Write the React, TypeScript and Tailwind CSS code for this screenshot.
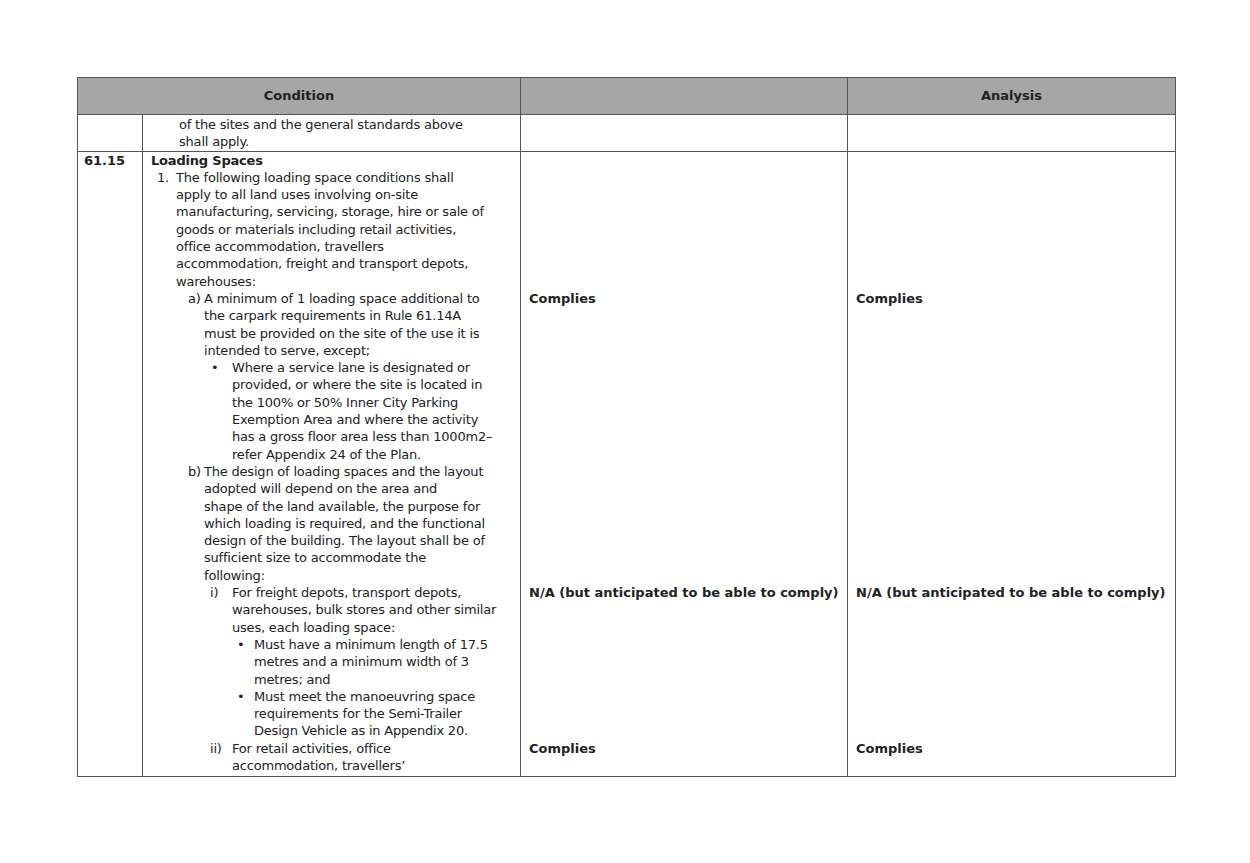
const lines: { t: string; m?: string; x: number; mx?: number; b?: boolean; a?: string }[] = [
  { t: "Loading Spaces", x: 0, b: true },
  { m: "1.", mx: 6, t: "The following loading space conditions shall", x: 25 },
  { t: "apply to all land uses involving on-site", x: 25 },
  { t: "manufacturing, servicing, storage, hire or sale of", x: 25 },
  { t: "goods or materials including retail activities,", x: 25 },
  { t: "office accommodation, travellers", x: 25 },
  { t: "accommodation, freight and transport depots,", x: 25 },
  { t: "warehouses:", x: 25 },
  { m: "a)", mx: 37, t: "A minimum of 1 loading space additional to", x: 53, a: "Complies" },
  { t: "the carpark requirements in Rule 61.14A", x: 53 },
  { t: "must be provided on the site of the use it is", x: 53 },
  { t: "intended to serve, except;", x: 53 },
  { m: "•", mx: 60, t: "Where a service lane is designated or", x: 81 },
  { t: "provided, or where the site is located in", x: 81 },
  { t: "the 100% or 50% Inner City Parking", x: 81 },
  { t: "Exemption Area and where the activity", x: 81 },
  { t: "has a gross floor area less than 1000m2–", x: 81 },
  { t: "refer Appendix 24 of the Plan.", x: 81 },
  { m: "b)", mx: 37, t: "The design of loading spaces and the layout", x: 53 },
  { t: "adopted will depend on the area and", x: 53 },
  { t: "shape of the land available, the purpose for", x: 53 },
  { t: "which loading is required, and the functional", x: 53 },
  { t: "design of the building. The layout shall be of", x: 53 },
  { t: "sufficient size to accommodate the", x: 53 },
  { t: "following:", x: 53 },
  { m: "i)", mx: 59, t: "For freight depots, transport depots,", x: 81, a: "N/A (but anticipated to be able to comply)" },
  { t: "warehouses, bulk stores and other similar", x: 81 },
  { t: "uses, each loading space:", x: 81 },
  { m: "•", mx: 86, t: "Must have a minimum length of 17.5", x: 103 },
  { t: "metres and a minimum width of 3", x: 103 },
  { t: "metres; and", x: 103 },
  { m: "•", mx: 86, t: "Must meet the manoeuvring space", x: 103 },
  { t: "requirements for the Semi-Trailer", x: 103 },
  { t: "Design Vehicle as in Appendix 20.", x: 103 },
  { m: "ii)", mx: 59, t: "For retail activities, office", x: 81, a: "Complies" },
  { t: "accommodation, travellers’", x: 81 },
];

const font = { fontFamily: '"DejaVu Sans", sans-serif' };

export default function App() {
  return (
    <div className="w-[1250px] h-[863px] bg-white pt-[77px] pl-[77px] text-[13px] text-[#222]" style={font}>
      <table className="border-collapse w-[1098px] table-fixed">
        <colgroup>
          <col className="w-[65px]" />
          <col className="w-[378px]" />
          <col className="w-[327px]" />
          <col className="w-[328px]" />
        </colgroup>
        <thead>
          <tr className="h-[37px] bg-[#a6a6a6] font-bold">
            <th colSpan={2} className="border border-[#555] text-center font-semibold">Condition</th>
            <th className="border border-[#555]"></th>
            <th className="border border-[#555] text-center font-semibold">Analysis</th>
          </tr>
        </thead>
        <tbody className="leading-[17.3px] align-top">
          <tr className="h-[36px]">
            <td className="border border-[#555]"></td>
            <td className="border border-[#555] pl-[36px] pt-px tracking-[-0.2px]">
              <div className="whitespace-nowrap">of the sites and the general standards above</div>
              <div>shall apply.</div>
            </td>
            <td className="border border-[#555]"></td>
            <td className="border border-[#555]"></td>
          </tr>
          <tr className="h-[625px]">
            <td className="border border-[#555] pl-[6px] font-bold">61.15</td>
            <td className="border border-[#555] pl-[8px] tracking-[-0.2px]">
              {lines.map((l, i) => (
                <div key={i} className={`relative whitespace-nowrap h-[17.3px] ${l.b ? "font-bold" : ""}`}>
                  {l.m && <span className="absolute" style={{ left: l.mx }}>{l.m}</span>}
                  <span className="absolute" style={{ left: l.x }}>{l.t}</span>
                </div>
              ))}
            </td>
            {[0, 1].map((c) => (
              <td key={c} className="border border-[#555] pl-[8px] font-bold">
                {lines.map((l, i) => (
                  <div key={i} className="h-[17.3px] whitespace-nowrap">{l.a ?? ""}</div>
                ))}
              </td>
            ))}
          </tr>
        </tbody>
      </table>
    </div>
  );
}
